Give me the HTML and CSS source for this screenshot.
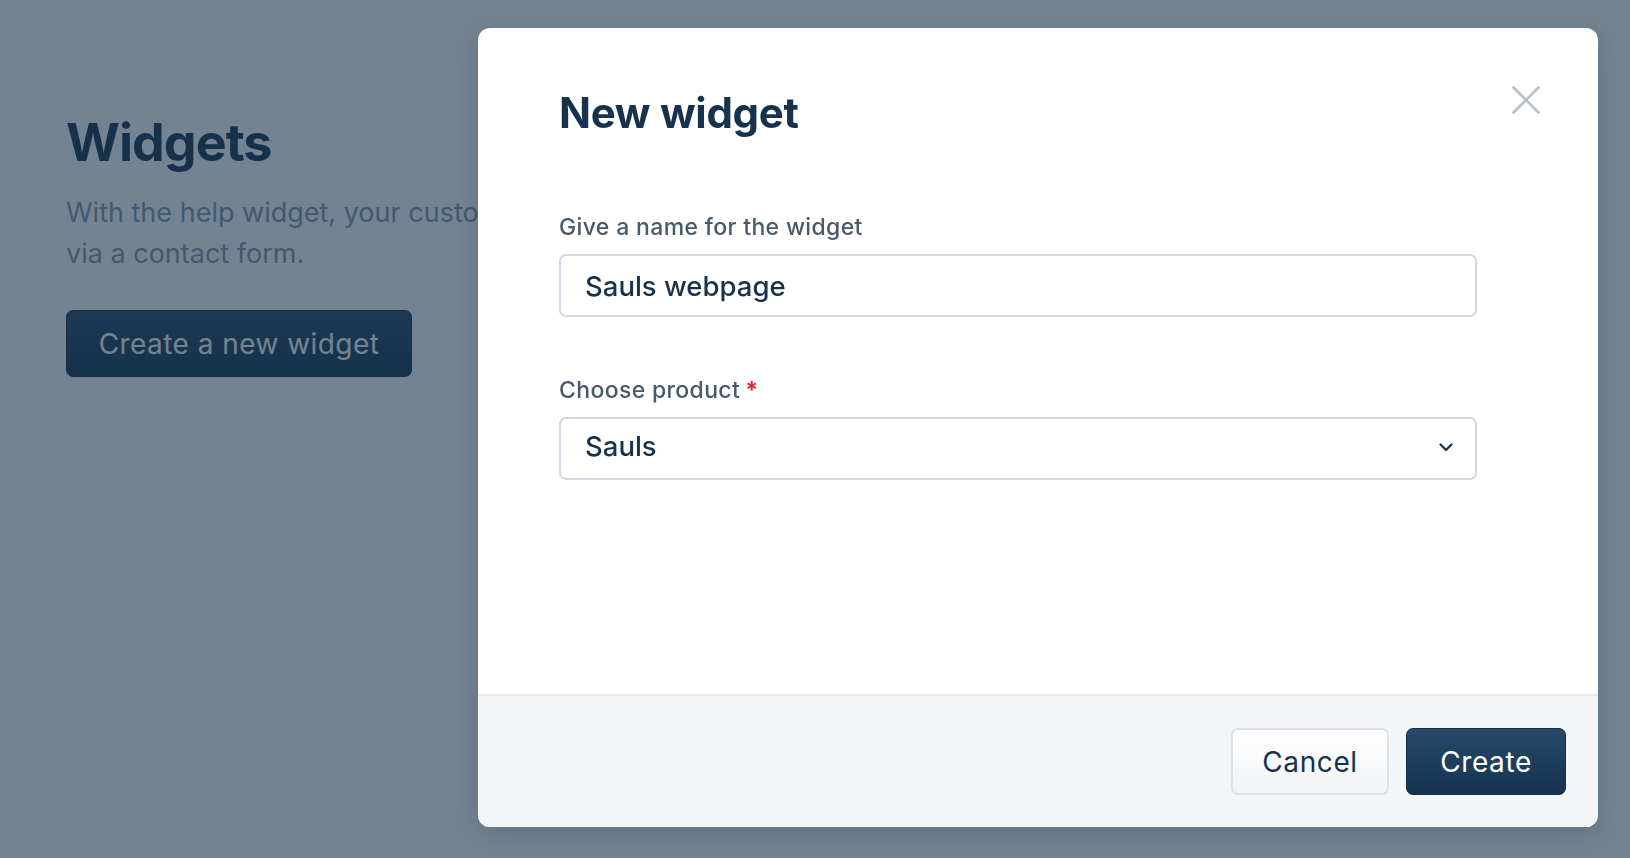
FILE: index.html
```html
<!DOCTYPE html>
<html lang="en">
<head>
<meta charset="utf-8">
<title>Widgets</title>
<link rel="stylesheet" href="styles.css">
</head>
<body>
<main class="page">
  <h1 class="page-title">Widgets</h1>
  <p class="page-text"><span class="page-line">With the help widget, your customers can contact you</span><span class="page-line">via a contact form.</span></p>
  <button class="btn btn-primary btn-page" type="button">Create a new widget</button>
</main>

<div class="overlay">
  <div class="modal" role="dialog" aria-labelledby="modal-title">
    <button class="modal-close" type="button" aria-label="Close">
      <svg width="28" height="28" viewBox="0 0 28 28" fill="none">
        <path d="M1.5 1.5 L26.5 26.5 M26.5 1.5 L1.5 26.5" stroke="#b4bfc7" stroke-width="2.6" stroke-linecap="round"/>
      </svg>
    </button>
    <div class="modal-body">
      <h2 class="modal-title" id="modal-title">New widget</h2>
      <div class="form">
        <div class="field">
          <div class="field-label">Give a name for the widget</div>
          <div class="field-control">Sauls webpage</div>
        </div>
        <div class="field">
          <div class="field-label">Choose product<span class="req">*</span></div>
          <div class="field-control field-select">
            <span>Sauls</span>
            <svg class="chevron" width="14" height="9" viewBox="0 0 14 9" fill="none">
              <path d="M1.5 1.5 L7 7 L12.5 1.5" stroke="#17324d" stroke-width="2.2" stroke-linecap="round" stroke-linejoin="round"/>
            </svg>
          </div>
        </div>
      </div>
    </div>
    <div class="modal-footer">
      <button class="btn btn-secondary btn-cancel" type="button">Cancel</button>
      <button class="btn btn-primary btn-create" type="button">Create</button>
    </div>
  </div>
</div>
</body>
</html>
```

FILE: styles.css
```css
* {
  box-sizing: border-box;
}

html, body {
  margin: 0;
  padding: 0;
  height: 100%;
}

body {
  font-family: Inter, "Noto Sans", "Liberation Sans", sans-serif;
  background: #ffffff;
  color: #17324d;
  overflow: hidden;
}

.page {
  padding: 112px 66px 0;
}

.page-title {
  margin: 0;
  font-size: 52px;
  line-height: 62px;
  font-weight: 700;
  letter-spacing: -1px;
  color: #17324d;
}

.page-text {
  margin: 18px 0 0;
  width: 412px;
  overflow: hidden;
  font-size: 27px;
  line-height: 41px;
  color: #8597aa;
  white-space: nowrap;
  display: flex;
  flex-direction: column;
}

.page-line {
  display: block;
}

.btn {
  font-family: Inter, "Noto Sans", "Liberation Sans", sans-serif;
  font-size: 28px;
  font-weight: 400;
  letter-spacing: 0.6px;
  height: 67px;
  border-radius: 7px;
  cursor: pointer;
  display: inline-flex;
  align-items: center;
  justify-content: center;
}

.btn-primary {
  color: #ffffff;
  border: 1px solid #14314c;
  background: linear-gradient(180deg, #27496a 0%, #15334f 100%);
}

.btn-secondary {
  color: #17324d;
  border: 2px solid #dce1e7;
  background: linear-gradient(180deg, #ffffff 0%, #f1f3f5 100%);
}

.btn-page {
  margin-top: 36px;
  width: 346px;
  letter-spacing: 0.45px;
}

.overlay {
  position: fixed;
  inset: 0;
  background: rgba(22, 48, 72, 0.6);
  display: flex;
  justify-content: flex-end;
  align-items: flex-start;
  padding: 28px 32px 0 0;
}

.modal {
  position: relative;
  width: 1120px;
  height: 799px;
  background: #ffffff;
  border-radius: 12px;
  box-shadow: 0 6px 24px rgba(10, 25, 40, 0.18);
  display: flex;
  flex-direction: column;
  overflow: hidden;
}

.modal-close {
  position: absolute;
  top: 58px;
  right: 58px;
  width: 28px;
  height: 28px;
  padding: 0;
  border: 0;
  background: transparent;
  cursor: pointer;
  display: flex;
}

.modal-body {
  flex: 1;
  padding: 60px 121px 0 81px;
}

.modal-title {
  margin: 0;
  font-size: 42px;
  line-height: 50px;
  font-weight: 700;
  letter-spacing: -0.3px;
  color: #17324d;
}

.form {
  margin-top: 74px;
  display: flex;
  flex-direction: column;
  gap: 58px;
}

.field {
  display: flex;
  flex-direction: column;
  gap: 12px;
}

.field-label {
  font-size: 23px;
  line-height: 30px;
  font-weight: 500;
  letter-spacing: 0.35px;
  color: #475a6c;
}

.req {
  color: #d9262e;
  font-weight: 700;
  margin-left: 5px;
}

.field-control {
  height: 63px;
  border: 2px solid #d0d9e2;
  border-radius: 7px;
  padding: 0 22px 0 24px;
  display: flex;
  align-items: center;
  font-size: 27.5px;
  font-weight: 500;
  color: #17324d;
}

.field-select {
  justify-content: space-between;
  padding-bottom: 5px;
}

.field-select .chevron {
  margin-top: 3px;
}

.chevron {
  display: block;
}

.modal-footer {
  height: 133px;
  background: #f4f5f7;
  border-top: 2px solid #e8ebf0;
  padding: 0 32px;
  display: flex;
  justify-content: flex-end;
  align-items: center;
  gap: 17px;
}

.btn-cancel {
  width: 158px;
}

.btn-create {
  width: 160px;
}
```
